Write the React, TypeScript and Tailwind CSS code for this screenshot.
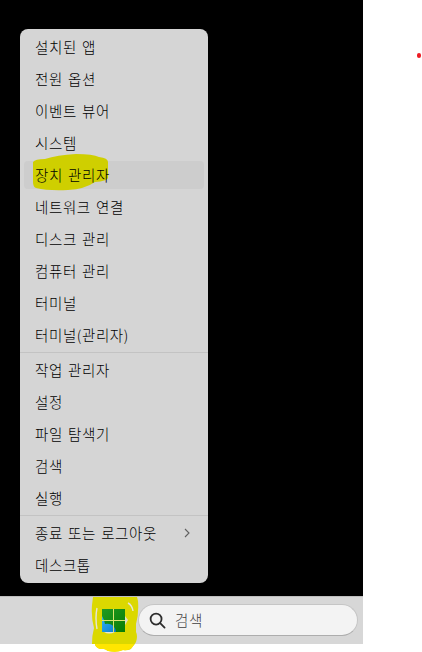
type Item = { label: string; highlighted?: boolean; submenu?: boolean };

const groups: Item[][] = [
  [
    { label: '설치된 앱' },
    { label: '전원 옵션' },
    { label: '이벤트 뷰어' },
    { label: '시스템' },
    { label: '장치 관리자', highlighted: true },
    { label: '네트워크 연결' },
    { label: '디스크 관리' },
    { label: '컴퓨터 관리' },
    { label: '터미널' },
    { label: '터미널(관리자)' },
  ],
  [
    { label: '작업 관리자' },
    { label: '설정' },
    { label: '파일 탐색기' },
    { label: '검색' },
    { label: '실행' },
  ],
  [{ label: '종료 또는 로그아웃', submenu: true }, { label: '데스크톱' }],
];

function MenuItem({ label, highlighted, submenu }: Item) {
  return (
    <li className="h-8 px-1 py-0.5">
      <div
        className={`relative flex h-7 items-center justify-between rounded pr-3 pl-[11px] ${highlighted ? 'bg-[#cdcdcd]' : ''}`}
      >
        {highlighted && (
          <svg className="absolute -top-[7px] left-[9px]" width="75" height="37" viewBox="0 0 75 37">
            <path
              d="M0 8Q2 5 12 5Q24 1 43 0Q60 0 66 3Q75 4 75 8V24Q74 27 62 28Q52 35 35 36Q15 37 3 34Q0 33 0 28Z"
              fill="#cfcf00"
            />
          </svg>
        )}
        <span className="relative">{label}</span>
        {submenu && (
          <svg width="10" height="10" viewBox="0 0 10 10" fill="none" stroke="#606060" strokeWidth="1.1">
            <path d="M3 1L7 5L3 9" />
          </svg>
        )}
      </div>
    </li>
  );
}

function StartButton() {
  return (
    <div className="relative ml-[102px] h-[23px] w-[23px]">
      <svg className="absolute -top-[12px] -left-[11px]" width="48" height="56" viewBox="0 0 48 56">
        <defs>
          <linearGradient id="green" x1="0" y1="0" x2="1" y2="1">
            <stop offset="0" stopColor="#1f9a22" />
            <stop offset="1" stopColor="#087c04" />
          </linearGradient>
          <linearGradient id="blue" x1="0" y1="0" x2="1" y2="1">
            <stop offset="0" stopColor="#35b4ee" />
            <stop offset="1" stopColor="#087bd0" />
          </linearGradient>
        </defs>
        <path
          d="M2 0H46L47 4Q48 16 45 27V35Q47 39 45 45Q43 49 41 50Q40 54 32 53Q26 56 17 54Q13 51 9 52Q4 50 4 47H1Q1 38 3 31Q0 20 1 8Z"
          fill="#dbd800"
        />
        <path d="M1 47H43Q41 54 32 53Q26 56 17 54Q13 51 9 52Q4 50 4 47Z" fill="#ffe600" />
        <path d="M6 11Q4 21 6 32M37 6Q41 8 42 14" fill="none" stroke="#e6e6d5" strokeWidth="1.4" />
        <path d="M34 19L37 23L34 28Z" fill="#dedec8" />
        <path d="M13 35H24Q18 38 13 35Z" fill="#e6e6d5" />
        <path d="M11 12H34V35H11Z" fill="url(#green)" />
        <path d="M11 19Q13 22 14 27Q20 26 23 30Q25 32 25 35H11Z" fill="url(#blue)" />
        <path d="M22.5 12V35M11 23.5H34" stroke="#dce46f" />
      </svg>
    </div>
  );
}

export default function App() {
  return (
    <div className="h-[652px] w-[422px] bg-white font-['Noto_Sans_CJK_KR',sans-serif] text-[14.5px] leading-5 font-light tracking-[0.6px] text-black [word-spacing:1.4px]">
      <div className="flex">
        <div className="h-[596px] w-[363px] bg-black pt-[29px] pl-5">
          <nav className="h-[554px] w-[188px] rounded-lg bg-[#d5d5d5] py-0.5">
            {groups.map((items, index) => (
              <ul key={index}>
                {index > 0 && (
                  <li className="h-[3px] py-px">
                    <div className="h-px bg-[#c3c3c3]" />
                  </li>
                )}
                {items.map((item) => (
                  <MenuItem key={item.label} {...item} />
                ))}
              </ul>
            ))}
          </nav>
        </div>
        <div className="mt-[53px] ml-[53.5px] h-[4.5px] w-[4.5px] rounded-full bg-[#ed1c24]" />
      </div>
      <div className="flex h-12 w-[363px] items-center border-t border-[#bebebe] bg-[#d7d7d7]">
        <StartButton />
        <div className="mb-px ml-[13px] flex h-8 w-[220px] items-center rounded-full border border-[#c5c5c5] border-b-[#adadad] bg-[#f3f3f3] pl-[10px] text-[#404040]">
          <svg width="17" height="17" viewBox="0 0 18 18" fill="none" stroke="#2d2d2d" strokeWidth="1.9">
            <circle cx="7.5" cy="7.5" r="5.8" />
            <path d="M11.8 11.8L16.5 16.5" strokeLinecap="round" />
          </svg>
          <span className="ml-[9px]">검색</span>
        </div>
      </div>
    </div>
  );
}
